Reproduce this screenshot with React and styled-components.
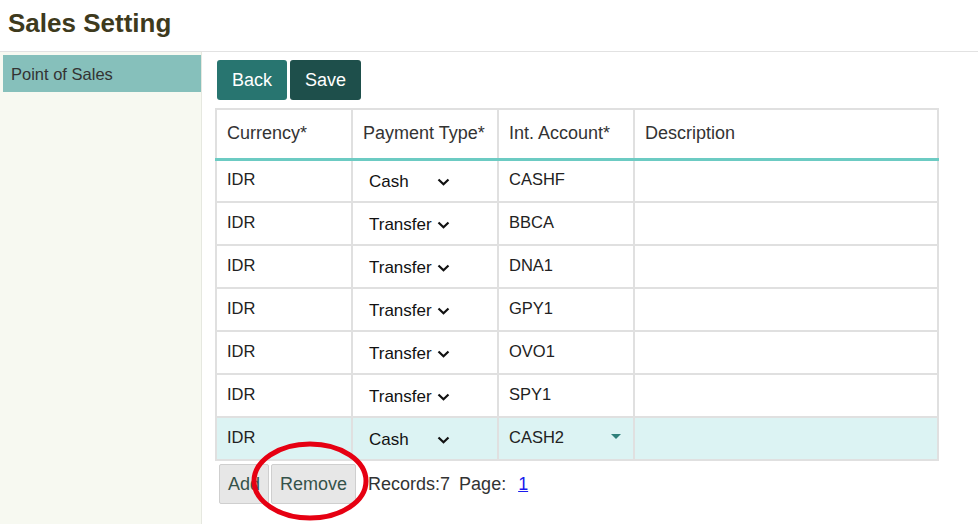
import React from "react";
import styled, { createGlobalStyle } from "styled-components";

const Global = createGlobalStyle`
  html, body { margin: 0; padding: 0; background: #fff; }
  body { font-family: "Liberation Sans", Arial, sans-serif; color: #333; }
  * { box-sizing: border-box; }
`;

const Page = styled.div`
  width: 978px;
  min-height: 530px;
  display: flex;
  flex-direction: column;
`;

const Header = styled.header`
  height: 52px;
  border-bottom: 1px solid #e2e2e2;
  padding: 7px 0 0 8px;
`;

const Title = styled.h1`
  margin: 0;
  font-size: 26px;
  font-weight: bold;
  color: #3e3a1d;
  line-height: 32px;
`;

const Body = styled.div`
  display: flex;
  align-items: stretch;
`;

const Sidebar = styled.nav`
  width: 202px;
  background: #f7f9f1;
  border-right: 1px solid #e6e8e0;
  padding: 3px 0 0 3px;
`;

const NavItem = styled.div`
  height: 37px;
  background: ${(p) => (p.$active ? "#86c0bb" : "transparent")};
  color: #333;
  font-size: 16.5px;
  padding: 10px 0 0 8px;
`;

const Content = styled.main`
  padding: 8px 0 20px 13px;
  position: relative;
`;

const Toolbar = styled.div`
  display: flex;
  gap: 3px;
  padding-left: 2px;
  margin-bottom: 8px;
`;

const PrimaryButton = styled.button`
  height: 40px;
  padding: 0 15px;
  border: none;
  border-radius: 3px;
  background: ${(p) => (p.$dark ? "#1e4f4b" : "#287570")};
  color: #fff;
  font-family: inherit;
  font-size: 18px;
`;

const Table = styled.table`
  border-collapse: collapse;
  width: 724px;
  table-layout: fixed;
  border: 2px solid #e0e0e0;
`;

const Th = styled.th`
  height: 50px;
  text-align: left;
  font-weight: normal;
  font-size: 18px;
  color: #333;
  padding: 0 0 0 10px;
  border: 2px solid #e0e0e0;
  border-bottom: 3px solid #6ccbc3;
`;

const Tr = styled.tr`
  background: ${(p) => (p.$selected ? "#dcf3f3" : "#fff")};
`;

const Td = styled.td`
  height: 43px;
  font-size: 16.5px;
  color: #222;
  padding: 0 10px 3px 10px;
  border: 2px solid #e0e0e0;
  vertical-align: middle;
`;

const SelectBox = styled.div`
  width: 87px;
  display: flex;
  align-items: center;
  justify-content: space-between;
  padding: 5px 0 0 6px;
  font-size: 17px;
  color: #111;
`;

const AccountCell = styled.div`
  display: flex;
  align-items: center;
  justify-content: space-between;
  padding-right: 2px;
`;

const Footer = styled.div`
  display: flex;
  align-items: center;
  gap: 2px;
  margin-top: 3px;
  padding-left: 4px;
`;

const GreyButton = styled.button`
  height: 40px;
  padding: 0 8px;
  border: 1px solid #cfcfcf;
  border-radius: 2px;
  background: #e7e7e7;
  color: #35524a;
  font-family: inherit;
  font-size: 18px;
`;

const Info = styled.span`
  font-size: 18px;
  color: #333;
  margin-left: 10px;
  word-spacing: 4px;
`;

const PageLink = styled.a`
  color: #1a1aee;
  text-decoration: underline;
  margin-left: 10px;
  font-size: 18px;
`;

const Highlight = styled.svg`
  position: absolute;
  left: 46px;
  top: 387px;
  pointer-events: none;
`;

const Chevron = () => (
  <svg width="13" height="8" viewBox="0 0 13 8">
    <path d="M1.5 1.5 L6.5 6.3 L11.5 1.5" fill="none" stroke="#111" strokeWidth="2.2" />
  </svg>
);

const Caret = () => (
  <svg width="10" height="6" viewBox="0 0 10 6">
    <path d="M0 0 L10 0 L5 5 Z" fill="#2f807a" />
  </svg>
);

const rows = [
  { pay: "Cash", acc: "CASHF" },
  { pay: "Transfer", acc: "BBCA" },
  { pay: "Transfer", acc: "DNA1" },
  { pay: "Transfer", acc: "GPY1" },
  { pay: "Transfer", acc: "OVO1" },
  { pay: "Transfer", acc: "SPY1" },
  { pay: "Cash", acc: "CASH2", selected: true },
];

export default function App() {
  return (
    <Page>
      <Global />
      <Header>
        <Title>Sales Setting</Title>
      </Header>
      <Body>
        <Sidebar>
          <NavItem $active>Point of Sales</NavItem>
        </Sidebar>
        <Content>
          <Toolbar>
            <PrimaryButton>Back</PrimaryButton>
            <PrimaryButton $dark>Save</PrimaryButton>
          </Toolbar>
          <Table>
            <colgroup>
              <col style={{ width: 136 }} />
              <col style={{ width: 146 }} />
              <col style={{ width: 136 }} />
              <col />
            </colgroup>
            <thead>
              <tr>
                <Th>Currency*</Th>
                <Th>Payment Type*</Th>
                <Th>Int. Account*</Th>
                <Th>Description</Th>
              </tr>
            </thead>
            <tbody>
              {rows.map((r, i) => (
                <Tr key={i} $selected={r.selected}>
                  <Td>IDR</Td>
                  <Td>
                    <SelectBox>
                      <span>{r.pay}</span>
                      <Chevron />
                    </SelectBox>
                  </Td>
                  <Td>
                    <AccountCell>
                      <span>{r.acc}</span>
                      {r.selected && <Caret />}
                    </AccountCell>
                  </Td>
                  <Td />
                </Tr>
              ))}
            </tbody>
          </Table>
          <Footer>
            <GreyButton>Add</GreyButton>
            <GreyButton>Remove</GreyButton>
            <Info>Records:7 Page:</Info>
            <PageLink href="#">1</PageLink>
          </Footer>
          <Highlight width="124" height="84" viewBox="0 0 124 84">
            <ellipse cx="62" cy="42" rx="56" ry="37" fill="none" stroke="#e60012" strokeWidth="5" />
          </Highlight>
        </Content>
      </Body>
    </Page>
  );
}
